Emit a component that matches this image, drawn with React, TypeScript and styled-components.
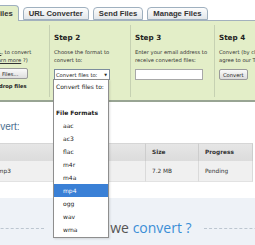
import React from "react";
import styled, { createGlobalStyle } from "styled-components";

const Global = createGlobalStyle`
  html, body { margin: 0; padding: 0; background: #fff; overflow: hidden; }
  body { width: 255px; height: 245px; }
`;

const Page = styled.div`
  width: 368px;
  margin-left: -60px;
  font-family: "DejaVu Sans", Verdana, sans-serif;
  color: #333;
`;

const TabBar = styled.div`
  display: flex;
  align-items: flex-end;
  gap: 4px;
  height: 20px;
  padding-left: 18px;
`;

const Tab = styled.div<{ $active?: boolean }>`
  box-sizing: border-box;
  height: ${(p) => (p.$active ? "16px" : "13px")};
  margin-bottom: ${(p) => (p.$active ? "-1px" : "0")};
  padding: 0 5px;
  display: flex;
  align-items: center;
  border: 1px solid #9fb0bf;
  border-bottom: ${(p) => (p.$active ? "none" : "1px solid #9fb0bf")};
  border-radius: 4px 4px 0 0;
  background: ${(p) =>
    p.$active ? "#e3eec8" : "linear-gradient(#fdfdfd, #e2e6ea)"};
  font-family: "Liberation Sans", Arial, sans-serif;
  font-weight: bold;
  font-size: 7.7px;
  color: #333;
  position: relative;
  z-index: 1;
`;

const Panel = styled.div`
  box-sizing: border-box;
  height: 82px;
  display: grid;
  grid-template-columns: 109px 81px 84px 1fr;
  background: #e3eec8;
  border-top: 1px solid #a3b1bd;
  border-bottom: 2px solid #98a493;
  padding: 4px 0 3px;
`;

const Step = styled.div<{ $divider?: boolean }>`
  display: flex;
  flex-direction: column;
  align-items: flex-start;
  padding: 8px 4px 0 4px;
  border-left: ${(p) => (p.$divider ? "1px solid #c6d1b2" : "none")};
  min-width: 0;
  white-space: nowrap;
`;

const StepTitle = styled.div`
  font-weight: bold;
  font-size: 7.2px;
  line-height: 10px;
  color: #222;
`;

const StepBody = styled.div<{ $indent?: number }>`
  display: flex;
  flex-direction: column;
  align-items: flex-start;
  margin-left: ${(p) => p.$indent ?? 0}px;
`;

const StepText = styled.p`
  margin: 5px 0 0;
  font-size: 5.2px;
  line-height: 8px;
  color: #333;
`;

const TextLink = styled.a`
  color: #333;
  text-decoration: underline;
`;

const FileButton = styled.button`
  margin-top: 4px;
  height: 11px;
  box-sizing: border-box;
  padding: 0 9px 0 10px;
  border: 1px solid #9a9a9a;
  border-radius: 2px;
  background: linear-gradient(#fafafa, #dedede);
  font-family: "DejaVu Sans", Verdana, sans-serif;
  font-size: 5.2px;
  color: #222;
`;

const DropHint = styled.div`
  margin-top: 3px;
  font-weight: bold;
  font-size: 5.2px;
  line-height: 8px;
  color: #222;
`;

const SelectBox = styled.div`
  position: relative;
  margin-top: 5px;
  box-sizing: border-box;
  width: 56px;
  height: 11px;
  border: 1px solid #7d8d9d;
  background: #fff;
  display: flex;
  align-items: center;
  justify-content: space-between;
  padding: 0 2px 0 1px;
  font-size: 5.2px;
  color: #222;
`;

const Arrow = styled.span`
  font-size: 3.6px;
`;

const Dropdown = styled.ul`
  position: absolute;
  top: 100%;
  left: -2px;
  z-index: 10;
  box-sizing: border-box;
  width: 56px;
  margin: 0;
  padding: 0 0 1px;
  list-style: none;
  background: #fff;
  border: 1px solid #8e8e8e;
  box-shadow: 1px 1px 2px rgba(0, 0, 0, 0.12);
`;

const Option = styled.li<{ $kind?: "plain" | "group" | "option"; $selected?: boolean }>`
  height: 13px;
  line-height: 13px;
  padding-left: ${(p) => (p.$kind === "option" ? "9px" : "2px")};
  font-size: 6px;
  font-weight: ${(p) => (p.$kind === "group" ? "bold" : "normal")};
  background: ${(p) => (p.$selected ? "#3a80d6" : "transparent")};
  color: ${(p) => (p.$selected ? "#fff" : "#222")};
`;

const EmailInput = styled.input`
  margin-top: 5px;
  box-sizing: border-box;
  width: 68px;
  height: 11px;
  border: 1px solid #a8a8a8;
  background: #fff;
  padding: 0;
`;

const ConvertButton = styled.button`
  margin-top: 5px;
  box-sizing: border-box;
  height: 11px;
  padding: 0 3px;
  border: 1px solid #9a9a9a;
  border-radius: 2px;
  background: linear-gradient(#fafafa, #dcdcdc);
  font-family: "DejaVu Sans", Verdana, sans-serif;
  font-size: 5.2px;
  color: #222;
`;

const ListHeading = styled.h2`
  box-sizing: border-box;
  height: 41px;
  margin: 0;
  padding: 19px 0 0 9px;
  font-family: "Liberation Sans", Arial, sans-serif;
  font-weight: normal;
  font-size: 10px;
  line-height: 12px;
  color: #4b6f8f;
`;

const Table = styled.div`
  margin-left: 13px;
  width: 300px;
  display: grid;
  grid-template-columns: 193px 53px 54px;
  font-size: 5.8px;
  color: #333;
`;

const HeadCell = styled.div`
  height: 17px;
  line-height: 17px;
  padding-left: 6px;
  font-weight: bold;
  background: linear-gradient(#e6e6e6, #dcdcdc);
  border-right: 1px solid #cdcdcd;
  border-top: 1px solid #d6d6d6;
`;

const Cell = styled.div`
  height: 20px;
  line-height: 20px;
  padding-left: 6px;
  background: #f0f0f0;
  border-right: 1px solid #dadada;
  border-bottom: 1px solid #e2e2e2;
`;

const HowSection = styled.div`
  box-sizing: border-box;
  margin-top: 16px;
  height: 60px;
  padding-top: 20px;
  background: #eef2f7;
  display: flex;
  align-items: flex-start;
  gap: 12px;
`;

const Dash = styled.div`
  flex: 1;
  margin-top: 10px;
  border-top: 1px dashed #bcc6d0;
`;

const HowTitle = styled.div`
  font-family: "Open Sans", "Liberation Sans", sans-serif;
  font-size: 14px;
  line-height: 20px;
  color: #555;
  white-space: nowrap;
`;

const Accent = styled.span`
  color: #3b8ed6;
`;

const formats = ["aac", "ac3", "flac", "m4r", "m4a", "mp4", "ogg", "wav", "wma"];

export default function App() {
  return (
    <>
      <Global />
      <Page>
        <TabBar>
          <Tab $active>Convert Files</Tab>
          <Tab>URL Converter</Tab>
          <Tab>Send Files</Tab>
          <Tab>Manage Files</Tab>
        </TabBar>
        <Panel>
          <Step>
            <StepTitle>Step 1</StepTitle>
            <StepBody $indent={47}>
              <StepText>
                <TextLink>URL</TextLink>, to convert
                <br />(<TextLink>learn more</TextLink> ?)
              </StepText>
              <FileButton>Files...</FileButton>
              <DropHint>or drop files</DropHint>
            </StepBody>
          </Step>
          <Step $divider>
            <StepTitle>Step 2</StepTitle>
            <StepText>
              Choose the format to
              <br />
              convert to:
            </StepText>
            <SelectBox>
              <span>Convert files to:</span>
              <Arrow>▼</Arrow>
              <Dropdown>
                <Option $kind="plain">Convert files to:</Option>
                <Option $kind="plain"></Option>
                <Option $kind="group">File Formats</Option>
                {formats.map((f) => (
                  <Option key={f} $kind="option" $selected={f === "mp4"}>
                    {f}
                  </Option>
                ))}
              </Dropdown>
            </SelectBox>
          </Step>
          <Step $divider>
            <StepTitle>Step 3</StepTitle>
            <StepText>
              Enter your email address to
              <br />
              receive converted files:
            </StepText>
            <EmailInput type="text" />
          </Step>
          <Step $divider>
            <StepTitle>Step 4</StepTitle>
            <StepText>
              Convert (by clicking you
              <br />
              agree to our Terms)
            </StepText>
            <ConvertButton>Convert</ConvertButton>
          </Step>
        </Panel>
        <ListHeading>Files to convert:</ListHeading>
        <Table>
          <HeadCell>File Name</HeadCell>
          <HeadCell>Size</HeadCell>
          <HeadCell>Progress</HeadCell>
          <Cell>holiday-song.mp3</Cell>
          <Cell>7.2 MB</Cell>
          <Cell>Pending</Cell>
        </Table>
        <HowSection>
          <Dash />
          <HowTitle>
            How do we <Accent>convert ?</Accent>
          </HowTitle>
          <Dash />
        </HowSection>
      </Page>
    </>
  );
}
